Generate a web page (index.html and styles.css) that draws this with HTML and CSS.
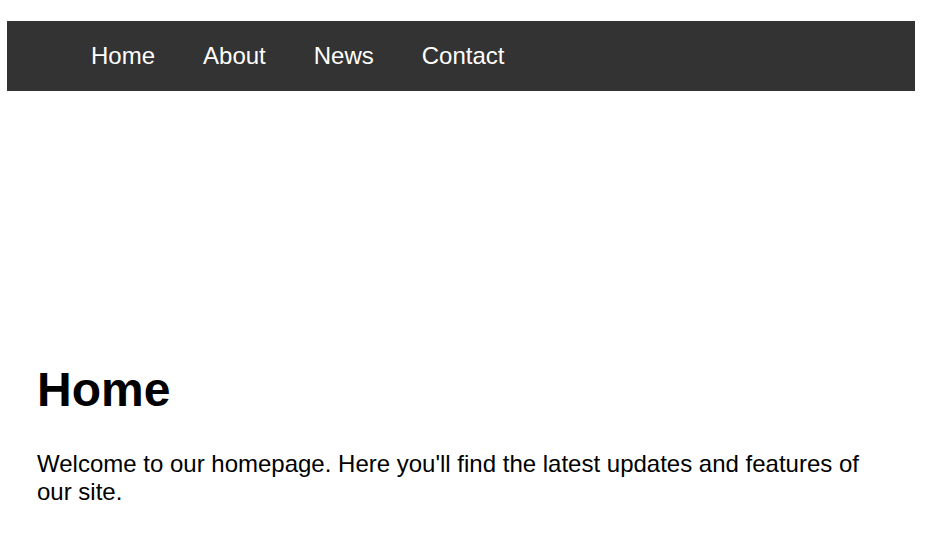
FILE: index.html
```html
<!DOCTYPE html>
<html lang="en">
<head>
<meta charset="utf-8">
<title>Home</title>
<link rel="stylesheet" href="styles.css">
</head>
<body>
<div class="page">
  <nav class="topnav">
    <a class="nav-link" href="#">Home</a>
    <a class="nav-link" href="#">About</a>
    <a class="nav-link" href="#">News</a>
    <a class="nav-link" href="#">Contact</a>
  </nav>
  <main class="content">
    <h1 class="title">Home</h1>
    <p class="lead">Welcome to our homepage. Here you'll find the latest updates and features of our site.</p>
  </main>
</div>
</body>
</html>
```
FILE: styles.css
```css
html, body {
  margin: 0;
  padding: 0;
  background: #ffffff;
}
body {
  font-family: "Liberation Sans", Arial, sans-serif;
  color: #000000;
}
.page {
  padding: 21px 10px 0 7px;
}
.topnav {
  display: flex;
  align-items: center;
  height: 70px;
  background: #333333;
  padding-left: 60px;
}
.nav-link {
  color: #ffffff;
  text-decoration: none;
  font-size: 24px;
  padding: 0 24px;
}
.content {
  padding: 271px 30px 0 30px;
}
.title {
  font-size: 48px;
  font-weight: bold;
  margin: 0 0 33px 0;
}
.lead {
  font-size: 24px;
  margin: 0;
}
```
